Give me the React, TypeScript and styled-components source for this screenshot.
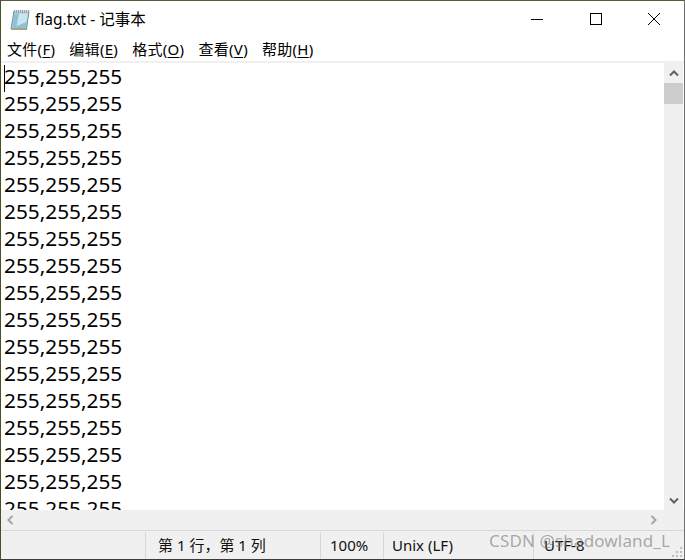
import React from "react";
import styled, { createGlobalStyle } from "styled-components";

const Global = createGlobalStyle`
  html, body { margin: 0; padding: 0; background: #fff; }
  body { width: 685px; height: 560px; overflow: hidden; }
`;

const Win = styled.div`
  position: relative;
  box-sizing: border-box;
  width: 685px;
  height: 560px;
  display: flex;
  flex-direction: column;
  background: #fff;
  border-left: 1px solid #4b4f28;
  border-right: 1px solid #6f6f6f;
  border-top: 1px solid #5a5a3a;
  border-bottom: 1px solid #3c3c3c;
  font-family: "Noto Sans", "Noto Sans CJK SC", sans-serif;
  color: #000;
`;

const TitleBar = styled.div`
  height: 36px;
  display: flex;
  align-items: center;
  flex: none;
  padding-right: 1px;
`;

const AppIcon = styled.svg`
  width: 20px;
  height: 21px;
  margin-left: 9px;
  flex: none;
`;

const TitleText = styled.div`
  margin-left: 5px;
  font-size: 15.5px;
  line-height: 36px;
  white-space: nowrap;
  flex: 1;
`;

const WinButton = styled.div<{ $w: number }>`
  width: ${(p) => p.$w}px;
  height: 36px;
  display: flex;
  align-items: center;
  justify-content: center;
  flex: none;
`;

const MenuBar = styled.div`
  height: 24px;
  flex: none;
  display: flex;
  align-items: center;
  padding-left: 6px;
  gap: 14px;
  border-bottom: 2px solid #f0f0f0;
`;

const MenuItem = styled.span`
  font-size: 15px;
  line-height: 24px;
  white-space: nowrap;
  letter-spacing: 0.3px;
  & u { text-underline-offset: 2px; }
`;

const Middle = styled.div`
  flex: 1;
  min-height: 0;
  display: flex;
`;

const Editor = styled.div`
  position: relative;
  flex: 1;
  min-width: 0;
  overflow: hidden;
  padding: 0 0 0 3px;
  font-size: 20.8px;
  line-height: 27px;
`;

const Caret = styled.div`
  position: absolute;
  left: 3px;
  top: 2px;
  width: 1px;
  height: 27px;
  background: #000;
`;

const Line = styled.div`
  white-space: nowrap;
  height: 27px;
`;

const VScroll = styled.div`
  width: 19px;
  margin-right: 1px;
  flex: none;
  background: #f0f0f0;
  display: flex;
  flex-direction: column;
`;

const ScrollBtn = styled.div`
  height: 20px;
  flex: none;
  display: flex;
  align-items: center;
  justify-content: center;
`;

const Thumb = styled.div`
  height: 21px;
  flex: none;
  background: #cdcdcd;
`;

const Spacer = styled.div`
  flex: 1;
`;

const HScroll = styled.div`
  height: 20px;
  flex: none;
  background: #f0f0f0;
  display: flex;
  align-items: center;
  justify-content: space-between;
  padding-right: 21px;
`;

const HBtn = styled.div`
  width: 19px;
  height: 20px;
  display: flex;
  align-items: center;
  justify-content: center;
`;

const StatusBar = styled.div`
  height: 28px;
  flex: none;
  background: #f0f0f0;
  border-top: 1px solid #d7d7d7;
  display: flex;
  font-size: 15px;
  color: #111;
`;

const StatusCell = styled.div<{ $w: number; $pad: number; $grow?: boolean }>`
  box-sizing: border-box;
  width: ${(p) => p.$w}px;
  flex: ${(p) => (p.$grow ? 1 : "none")};
  margin-top: 1px;
  padding-left: ${(p) => p.$pad}px;
  border-left: ${(p) => (p.$pad ? "1px solid #d7d7d7" : "none")};
  line-height: 27px;
  white-space: nowrap;
`;

const Watermark = styled.div`
  position: absolute;
  left: 488px;
  top: 528px;
  font-size: 17px;
  line-height: 24px;
  letter-spacing: 0.15px;
  color: rgba(120, 120, 120, 0.62);
  white-space: nowrap;
`;

const Grip = styled.svg`
  position: absolute;
  right: 1px;
  bottom: 1px;
  width: 12px;
  height: 12px;
`;

const chevron = "#606060";
const faded = "#a6a6a6";

export default function App() {
  return (
    <Win>
      <Global />
      <TitleBar>
        <AppIcon viewBox="0 0 20 21">
          <path d="M4 2 L19 2 L16.5 20 L1 20 Z" fill="#a9d6e6" stroke="#6d8ea0" strokeWidth="1" />
          <path d="M4.5 4.5 L17.8 4.5 L15.6 19 L2.4 19 Z" fill="#8cc2d6" />
          <path d="M9 4.5 L17.8 4.5 L16.4 13 L6.5 17 Z" fill="#c8e6f0" />
          <path d="M4 1 H19 V4 H4 Z" fill="#9aa4aa" />
          <path d="M5.5 1 V3.5 M7.5 1 V3.5 M9.5 1 V3.5 M11.5 1 V3.5 M13.5 1 V3.5 M15.5 1 V3.5 M17.5 1 V3.5" stroke="#e8e8e8" strokeWidth="0.8" />
          <path d="M1.5 20.2 H17" stroke="#b79b6a" strokeWidth="1.5" />
        </AppIcon>
        <TitleText>flag.txt - 记事本</TitleText>
        <WinButton $w={60}>
          <svg width="12" height="12" viewBox="0 0 12 12"><path d="M0 6.5H12" stroke="#000" strokeWidth="1" /></svg>
        </WinButton>
        <WinButton $w={58}>
          <svg width="12" height="12" viewBox="0 0 12 12"><rect x="0.5" y="0.5" width="11" height="11" fill="none" stroke="#000" strokeWidth="1" /></svg>
        </WinButton>
        <WinButton $w={58}>
          <svg width="12" height="12" viewBox="0 0 12 12"><path d="M0 0L12 12M12 0L0 12" stroke="#000" strokeWidth="1" /></svg>
        </WinButton>
      </TitleBar>
      <MenuBar>
        <MenuItem>文件(<u>F</u>)</MenuItem>
        <MenuItem>编辑(<u>E</u>)</MenuItem>
        <MenuItem>格式(<u>O</u>)</MenuItem>
        <MenuItem>查看(<u>V</u>)</MenuItem>
        <MenuItem>帮助(<u>H</u>)</MenuItem>
      </MenuBar>
      <Middle>
        <Editor>
          <Caret />
          {Array.from({ length: 17 }, (_, i) => (
            <Line key={i}>255,255,255</Line>
          ))}
        </Editor>
        <VScroll>
          <ScrollBtn>
            <svg width="10" height="7" viewBox="0 0 10 7"><path d="M1 5.5L5 1.5L9 5.5" fill="none" stroke={chevron} strokeWidth="2" /></svg>
          </ScrollBtn>
          <Thumb />
          <Spacer />
          <ScrollBtn>
            <svg width="10" height="7" viewBox="0 0 10 7"><path d="M1 1.5L5 5.5L9 1.5" fill="none" stroke={chevron} strokeWidth="2" /></svg>
          </ScrollBtn>
        </VScroll>
      </Middle>
      <HScroll>
        <HBtn>
          <svg width="7" height="10" viewBox="0 0 7 10"><path d="M5.5 1L1.5 5L5.5 9" fill="none" stroke={faded} strokeWidth="2" /></svg>
        </HBtn>
        <HBtn>
          <svg width="7" height="10" viewBox="0 0 7 10"><path d="M1.5 1L5.5 5L1.5 9" fill="none" stroke={faded} strokeWidth="2" /></svg>
        </HBtn>
      </HScroll>
      <StatusBar>
        <StatusCell $w={144} $pad={0} />
        <StatusCell $w={175} $pad={12}>第 1 行，第 1 列</StatusCell>
        <StatusCell $w={63} $pad={9}>100%</StatusCell>
        <StatusCell $w={150} $pad={8}>Unix (LF)</StatusCell>
        <StatusCell $w={150} $pad={10} $grow>UTF-8</StatusCell>
      </StatusBar>
      <Watermark>CSDN @shadowland_L</Watermark>
      <Grip viewBox="0 0 12 12">
        <g fill="#bdbdbd">
          <rect x="9" y="1" width="2" height="2" />
          <rect x="5" y="5" width="2" height="2" />
          <rect x="9" y="5" width="2" height="2" />
          <rect x="1" y="9" width="2" height="2" />
          <rect x="5" y="9" width="2" height="2" />
          <rect x="9" y="9" width="2" height="2" />
        </g>
      </Grip>
    </Win>
  );
}
